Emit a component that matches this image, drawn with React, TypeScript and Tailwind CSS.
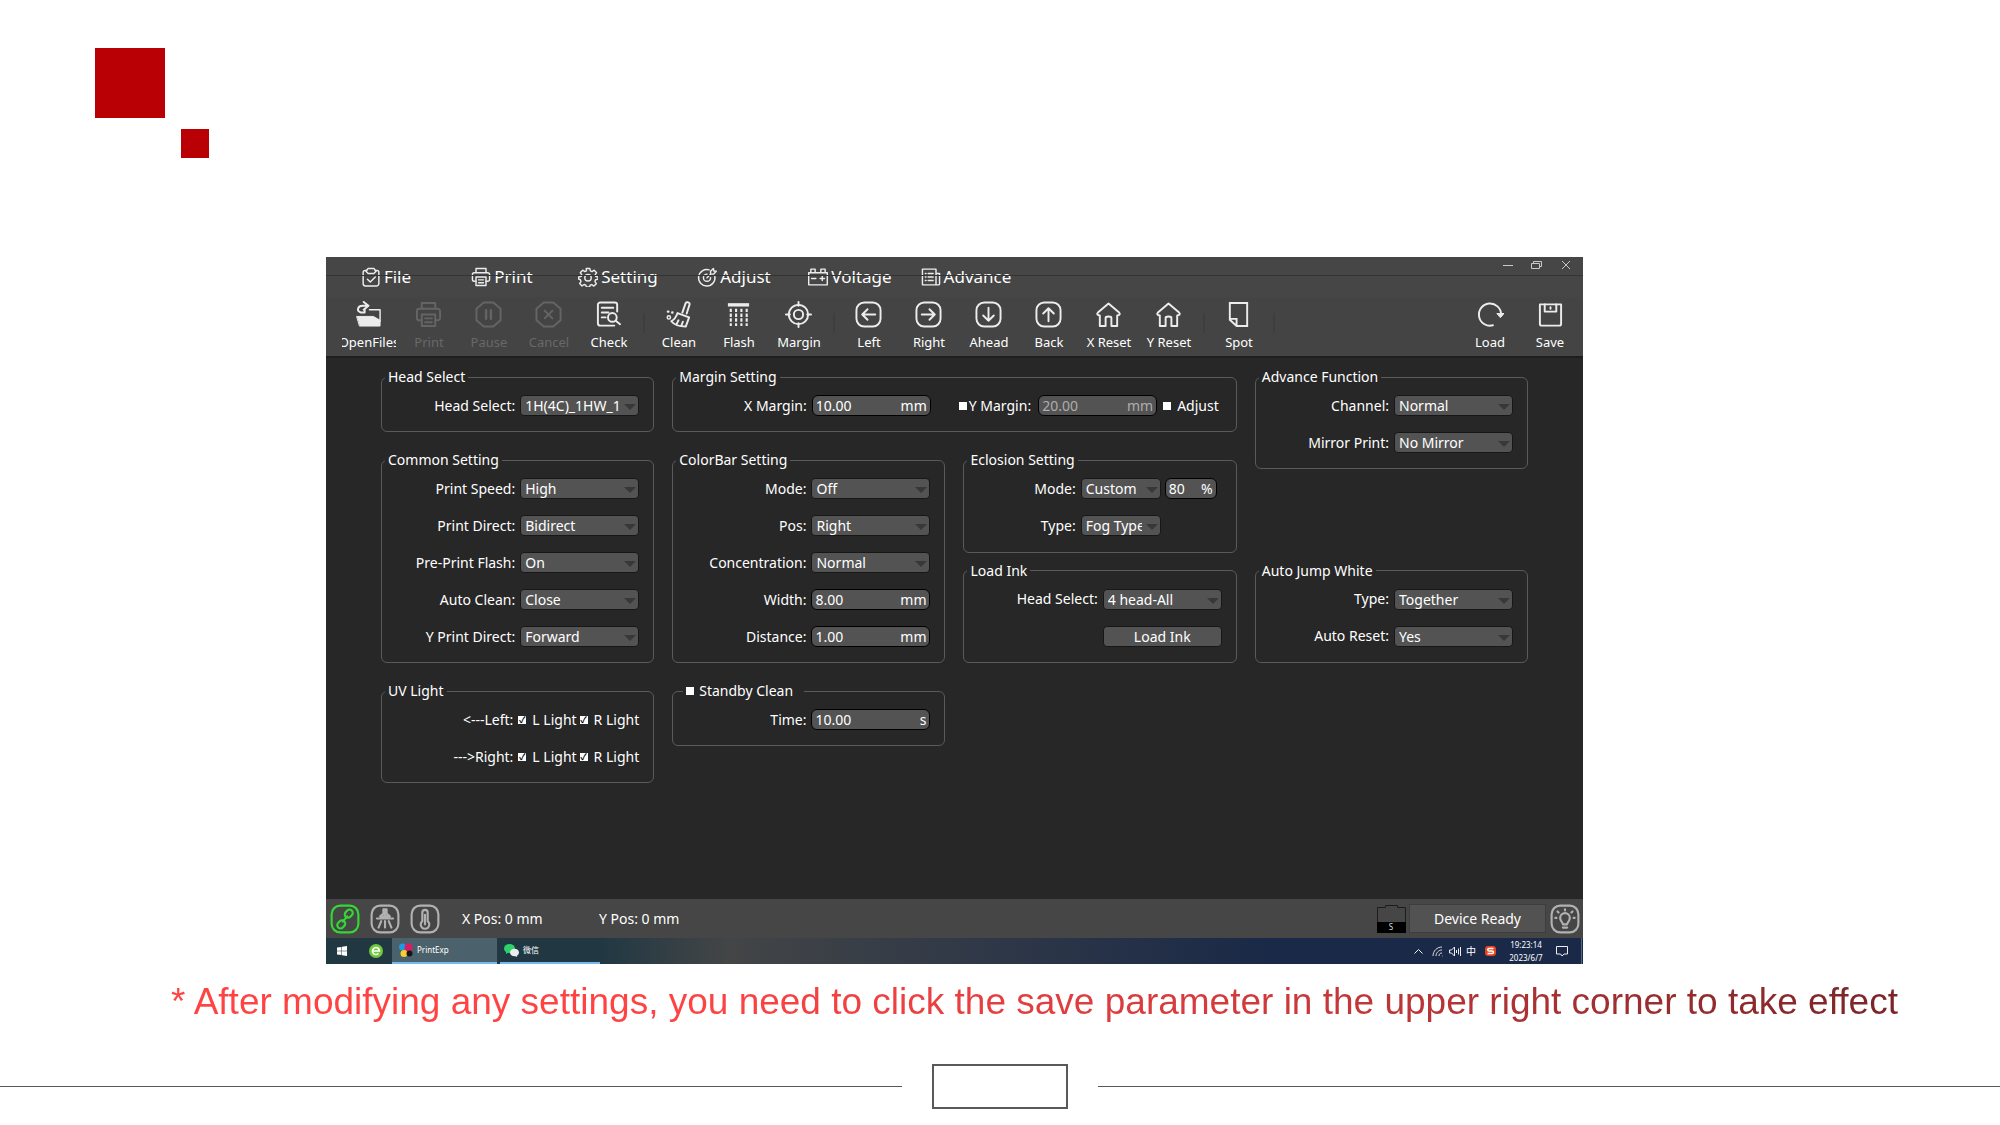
import type { ReactNode } from "react";

interface FieldProps {
  id: string
  label: string
}

interface SelectFieldProps extends FieldProps {
  value: string
  short?: boolean
}

interface UnitInputProps {
  id: string
  value: string
  unit: string
  short?: boolean
  disabled?: boolean
}

interface CheckProps {
  id: string
  checked?: boolean
}

interface GroupProps {
  title: ReactNode
  className?: string
  children: ReactNode
}

interface ToolProps {
  label: string
  disabled?: boolean
  children: ReactNode
}

/* ---------- icons ---------- */

function Icon({ size = 27, width = 2, children }: { size?: number; width?: number; children: ReactNode }) {
  return (
    <svg
      width={size}
      height={size}
      viewBox="0 0 28 28"
      fill="none"
      stroke="currentColor"
      strokeWidth={width}
      strokeLinecap="round"
      strokeLinejoin="round"
      className="shrink-0 opacity-90"
      aria-hidden="true"
    >
      {children}
    </svg>
  )
}

const fileIcon = (
  <>
    <path d="M8 5H5.500a2.500 2.500 0 0 0-2.500 2.500V23a3.500 3.500 0 0 0 3.500 3.500h15A3.500 3.500 0 0 0 25 23V7.500A2.500 2.500 0 0 0 22.500 5H20" />
    <path d="M10 2h8l3 4-3 3h-8L7 6zM9 17l4 4 7-7" />
  </>
)

const printIcon = (
  <>
    <path d="M7 8V2h14v6M7 20H4.500A2.500 2.500 0 0 1 2 17.500V10.500A2.500 2.500 0 0 1 4.500 8h19a2.500 2.500 0 0 1 2.500 2.500v7a2.500 2.500 0 0 1-2.500 2.500H21" />
    <path d="M7 14h14v12H7zM10.500 18h7M10.500 22h7" />
  </>
)

const settingIcon = (
  <>
    <path d="M11.500 2h5l.8 3.500 2.400 1 3-2 3.300 3.400-2 3.100 1 2.300 3 .7v3l-3.500.9-.9 2.300 2 3.200-3.300 3.300-3.100-2-2.200.9-.8 2.400h-4.400l-.8-2.600-2.400-.9-3 2-3.300-3.300 2-3-1-2.400L1 17v-3l3.400-.8.9-2.200-2-3.200 3.300-3.300 3.100 2 2.200-1z" />
    <circle cx="14" cy="15" r="4.500" />
  </>
)

const adjustIcon = (
  <>
    <path d="M17 4A11.500 11.500 0 1 0 25 13" />
    <path d="M14 10a5 5 0 1 0 5 5M14 15l5-5M19 10V6l4-4 .5 3.500L27 6l-4 4z" />
  </>
)

const voltageIcon = (
  <path d="M1 8h26v17H1zM4 8V3h6v5M18 8V3h6v5M5 16h6M17 16h6M20 13v6" />
)

const advanceIcon = (
  <>
    <path d="M2 3h19v22H2zM21 9h5v14.500a1.500 1.500 0 0 1-1.500 1.500H21" />
    <path d="M6 9h1M10 9h7M6 14h1M10 14h7M6 19h1M10 19h7" />
  </>
)

const openIcon = (
  <>
    <path d="M15 9h11v12" strokeWidth="1.500" />
    <path d="M2 16h17l7 4v6H5z" fill="currentColor" strokeWidth="1" />
    <path d="M6 12C1 10 3 5 8 5h4M9 1l5 4-5 4M6 12h4V9" />
  </>
)

const frame = <path d="M9 1.500h10L26.500 8v12L19 26.500H9L1.500 20V8z" strokeLinejoin="round" />
const roundFrame = <rect x="1.500" y="1.500" width="25" height="25" rx="8" />

const checkIcon = (
  <>
    <path d="M23 11V4a2.500 2.500 0 0 0-2.500-2.500h-15A2.500 2.500 0 0 0 3 4v19a2.500 2.500 0 0 0 2.500 2.500H20" />
    <path d="M7 7h12M7 12h7M7 17h4" />
    <circle cx="18" cy="17" r="4.500" />
    <path d="M21.500 20.500 26 24" />
  </>
)

const cleanIcon = (
  <>
    <path d="M18 12l3.500-10c1-1.500 4.500-.5 4 1.500L22.500 13" />
    <path d="M13 12.500 25 17l-3.500 9.500C15 26.500 9 24 6.500 21c3-1.500 5-4 6.500-8.500zM12 24l2-4M17 25.500l1.500-4" />
    <circle cx="4" cy="17" r="1.700" strokeWidth="1.500" />
    <path d="M3 11h.5M7.500 12h.2" strokeWidth="2.500" />
  </>
)

const flashIcon = (
  <>
    <path d="M3 4h22" strokeWidth="3.500" strokeLinecap="butt" />
    <path d="M6 8v18M11.500 8v18M17 8v18M22.500 8v18" strokeDasharray="3.500 1.500" strokeWidth="2.200" strokeLinecap="butt" />
  </>
)

const marginIcon = (
  <>
    <circle cx="14" cy="14" r="10" />
    <circle cx="14" cy="14" r="4.800" />
    <path d="M14 1v4M14 23v4M1 14h4M23 14h4" />
  </>
)

const homeIcon = (
  <path d="M14 2.500 3 12c-1.500 1.500-.5 3 2 3v11h6v-8.500c0-2 6-2 6 0V26h6V15c2.500 0 3.500-1.500 2-3z" />
)

const spotIcon = <path d="M5 2h18v24H12l-7-6.500zM5 18.500h7V26" strokeLinejoin="miter" />

const loadIcon = (
  <>
    <path d="M16.500 25.200A11.500 11.500 0 1 1 25 14" />
    <path d="M21 13h7l-3.500 4z" fill="currentColor" strokeWidth="1" />
  </>
)

const saveIcon = (
  <>
    <path d="M3 3.500h22v20a2 2 0 0 1-2 2H5a2 2 0 0 1-2-2z" />
    <path d="M8 3.500V11h12V3.500M14 6.500V8" />
  </>
)

const linkIcon = (
  <>
    <rect x="13.500" y="6" width="8" height="6" rx="3" transform="rotate(-45 17.500 9)" />
    <rect x="6.500" y="16" width="8" height="6" rx="3" transform="rotate(-45 10.500 19)" />
    <path d="M12 16.500 16 11.500" />
  </>
)

const nozzleIcon = (
  <path d="M14 5v5M12.500 5h3v4l3 2.500h-9l3-2.500zM6.500 13.500h15M10.500 16 8 22M14 16v6M17.500 16l2.500 6" />
)

const thermoIcon = (
  <>
    <path d="M11.500 16V8a2.500 2.500 0 0 1 5 0v8a4 4 0 1 1-5 0z" />
    <path d="M14 10v9" strokeWidth="2" />
  </>
)

const bulbIcon = (
  <>
    <path d="M12 19c0-2-2.500-3-2.500-6a4.500 4.500 0 0 1 9 0c0 3-2.500 4-2.500 6zM12 22h4" />
    <path d="M14 5v1M20 8l1-1M8 8 7 7M5 13h1M22 13h1" />
  </>
)

/* ---------- form parts ---------- */

function Select({ id, value, short }: { id: string; value: string; short?: boolean }) {
  return (
    <span className={`relative shrink-0 ${short ? "w-20" : "w-[119px]"}`}>
      <select
        id={id}
        defaultValue={value}
        className="block h-[21px] w-full appearance-none overflow-hidden text-clip rounded border border-[#171717] bg-[#535353] pl-1 pr-[18px] text-sm leading-[19px] text-white"
      >
        <option>{value}</option>
      </select>
      <svg width="12" height="6" viewBox="0 0 12 6" className="pointer-events-none absolute right-[3px] top-[9px]" aria-hidden="true">
        <path d="M0 0h12L6 6z" fill="#383838" />
      </svg>
    </span>
  )
}

function UnitInput({ id, value, unit, short, disabled }: UnitInputProps) {
  return (
    <span
      className={`flex h-[21px] shrink-0 items-center rounded-md border border-black bg-[#535353] px-[3px] ${short ? "w-[52px]" : "w-[119px]"} ${disabled ? "text-[#adadad]" : "text-white"}`}
    >
      <input id={id} defaultValue={value} disabled={disabled} className="h-[19px] w-0 flex-1 bg-transparent text-sm leading-[19px]" />
      <span>{unit}</span>
    </span>
  )
}

function Check({ id, checked }: CheckProps) {
  return (
    <input
      id={id}
      type="checkbox"
      defaultChecked={checked}
      className="grid size-2 shrink-0 appearance-none place-items-center bg-white checked:before:text-[9px] checked:before:font-bold checked:before:leading-2 checked:before:text-black checked:before:content-['✓']"
    />
  )
}

function SelectField({ id, label, value, short }: SelectFieldProps) {
  return (
    <div className="flex h-[21px] items-center justify-end gap-[5px]">
      <label htmlFor={id}>{label}</label>
      <Select id={id} value={value} short={short} />
    </div>
  )
}

function InputField({ id, label, value, unit }: FieldProps & { value: string; unit: string }) {
  return (
    <div className="flex h-[21px] items-center justify-end gap-[5px]">
      <label htmlFor={id}>{label}</label>
      <UnitInput id={id} value={value} unit={unit} />
    </div>
  )
}

function Group({ title, className = "", children }: GroupProps) {
  return (
    <fieldset className={`min-w-0 rounded-md border border-[#5a5a5a] pb-[15px] pr-[14px] ${className}`}>
      <legend className="ml-[3px] px-[3px] leading-5">{title}</legend>
      <div className="flex flex-col gap-4 pt-2">{children}</div>
    </fieldset>
  )
}

function UvRow({ id, label }: FieldProps) {
  return (
    <div className="flex h-[21px] items-center justify-end">
      <span className="mr-[5px]">{label}</span>
      <Check id={`${id}-l`} checked />
      <label htmlFor={`${id}-l`} className="ml-1.5 mr-[3px]">L Light</label>
      <Check id={`${id}-r`} checked />
      <label htmlFor={`${id}-r`} className="ml-1.5">R Light</label>
    </div>
  )
}

/* ---------- bars ---------- */

function MenuItem({ label, children }: ToolProps) {
  return (
    <button className="flex w-[116px] items-center justify-center gap-[3px] text-[17px] leading-6">
      <Icon size={20} width={2}>{children}</Icon>
      {label}
    </button>
  )
}

function Tool({ label, disabled, children }: ToolProps) {
  return (
    <button disabled={disabled} className="flex w-[60px] flex-col items-center gap-[5px] disabled:text-[#686868]">
      <Icon>{children}</Icon>
      <span className="flex w-[54px] justify-center overflow-hidden whitespace-nowrap text-[13px] leading-[18px]">{label}</span>
    </button>
  )
}

function Separator() {
  return <span className="mx-1 mt-3 h-5 w-0.5 bg-[#3e3e3e]" />
}

function StatusIcon({ label, className = "", children }: { label: string; className?: string; children: ReactNode }) {
  return (
    <button aria-label={label} className={className}>
      <Icon size={30} width={2}>
        {roundFrame}
        {children}
      </Icon>
    </button>
  )
}

function TitleBar() {
  return (
    <header className="bg-[#444]">
      <div className="relative flex h-10 justify-between bg-[#464646] pl-[2px]">
        <nav className="flex items-center">
          <MenuItem label="File">{fileIcon}</MenuItem>
          <MenuItem label="Print">{printIcon}</MenuItem>
          <MenuItem label="Setting">{settingIcon}</MenuItem>
          <MenuItem label="Adjust">{adjustIcon}</MenuItem>
          <MenuItem label="Voltage">{voltageIcon}</MenuItem>
          <MenuItem label="Advance">{advanceIcon}</MenuItem>
        </nav>
        <div className="flex h-4 items-center gap-[18px] pr-3 text-[#c8c8c8]">
          <button aria-label="Minimize">
            <svg width="10" height="10" viewBox="0 0 10 10" stroke="currentColor"><path d="M0 5.500h10" /></svg>
          </button>
          <button aria-label="Restore">
            <svg width="12" height="10" viewBox="0 0 12 10" fill="none" stroke="currentColor"><path d="M.5 3.500h8v5h-8zM2.500 3.500v-2h8v5h-2" /></svg>
          </button>
          <button aria-label="Close">
            <svg width="10" height="10" viewBox="0 0 10 10" stroke="currentColor"><path d="M1 1l8 8M9 1 1 9" /></svg>
          </button>
        </div>
        <span className="pointer-events-none absolute inset-x-0 top-[18px] h-px bg-[#343434]" />
      </div>
      <div className="flex h-[59px] items-start pl-[13px] pr-[3px] pt-1">
        <Tool label="OpenFiles">{openIcon}</Tool>
        <Tool label="Print" disabled>{printIcon}</Tool>
        <Tool label="Pause" disabled>
          {frame}
          <path d="M11.500 9.500v9M16.500 9.500v9" strokeWidth="2.500" />
        </Tool>
        <Tool label="Cancel" disabled>
          {frame}
          <path d="m10 10 8 8M18 10l-8 8" />
        </Tool>
        <Tool label="Check">{checkIcon}</Tool>
        <Separator />
        <Tool label="Clean">{cleanIcon}</Tool>
        <Tool label="Flash">{flashIcon}</Tool>
        <Tool label="Margin">{marginIcon}</Tool>
        <Separator />
        <Tool label="Left">
          {roundFrame}
          <path d="M21 14H7.500M13 8.500 7.500 14l5.500 5.500" />
        </Tool>
        <Tool label="Right">
          {roundFrame}
          <path d="M7 14h13.500M15 8.500l5.500 5.500-5.500 5.500" />
        </Tool>
        <Tool label="Ahead">
          {roundFrame}
          <path d="M14 7v13.500M8.500 15l5.500 5.500 5.500-5.500" />
        </Tool>
        <Tool label="Back">
          {roundFrame}
          <path d="M14 21V7.500M8.500 13 14 7.500l5.500 5.500" />
        </Tool>
        <Tool label="X Reset">{homeIcon}</Tool>
        <Tool label="Y Reset">{homeIcon}</Tool>
        <Separator />
        <Tool label="Spot">{spotIcon}</Tool>
        <Separator />
        <span className="flex-1" />
        <Tool label="Load">{loadIcon}</Tool>
        <Tool label="Save">{saveIcon}</Tool>
      </div>
    </header>
  )
}

function Settings() {
  return (
    <main className="grid min-h-[543px] grid-cols-4 content-start gap-x-[18px] border-t-2 border-[#1f1f1f] bg-[#272727] px-[55px] pt-[9px] text-sm">
      <Group title="Head Select">
        <SelectField id="head" label="Head Select:" value="1H(4C)_1HW_1" />
      </Group>

      <Group title="Margin Setting" className="col-span-2">
        <div className="flex h-[21px] items-center justify-end">
          <label htmlFor="x-margin" className="mr-[5px]">X Margin:</label>
          <UnitInput id="x-margin" value="10.00" unit="mm" />
          <span className="ml-7 mr-0.5 flex items-center">
            <Check id="y-margin-on" />
          </span>
          <label htmlFor="y-margin-on" className="mr-[7px]">Y Margin:</label>
          <UnitInput id="y-margin" value="20.00" unit="mm" disabled />
          <span className="ml-1.5 mr-[3px] flex items-center gap-1.5">
            <Check id="adjust" />
            <label htmlFor="adjust">Adjust</label>
          </span>
        </div>
      </Group>

      <Group title="Advance Function" className="row-span-2 self-start">
        <SelectField id="channel" label="Channel:" value="Normal" />
        <SelectField id="mirror" label="Mirror Print:" value="No Mirror" />
      </Group>

      <Group title="Common Setting" className="row-span-2 mt-[18px]">
        <SelectField id="speed" label="Print Speed:" value="High" />
        <SelectField id="direct" label="Print Direct:" value="Bidirect" />
        <SelectField id="pre-flash" label="Pre-Print Flash:" value="On" />
        <SelectField id="auto-clean" label="Auto Clean:" value="Close" />
        <SelectField id="y-direct" label="Y Print Direct:" value="Forward" />
      </Group>

      <Group title="ColorBar Setting" className="row-span-2 mt-[18px]">
        <SelectField id="bar-mode" label="Mode:" value="Off" />
        <SelectField id="bar-pos" label="Pos:" value="Right" />
        <SelectField id="bar-conc" label="Concentration:" value="Normal" />
        <InputField id="bar-width" label="Width:" value="8.00" unit="mm" />
        <InputField id="bar-distance" label="Distance:" value="1.00" unit="mm" />
      </Group>

      <Group title="Eclosion Setting" className="mt-[18px]">
        <div className="flex items-center justify-end gap-1 pr-[5px]">
          <SelectField id="ecl-mode" label="Mode:" value="Custom" short />
          <UnitInput id="ecl-percent" value="80" unit="%" short />
        </div>
        <div className="pr-[61px]">
          <SelectField id="ecl-type" label="Type:" value="Fog Type" short />
        </div>
      </Group>

      <Group title="Load Ink" className="col-start-3 mt-2">
        <SelectField id="ink-head" label="Head Select:" value="4 head-All" />
        <button className="h-[21px] w-[119px] self-end rounded border border-[#171717] bg-[#535353] leading-[19px]">Load Ink</button>
      </Group>

      <Group title="Auto Jump White" className="mt-2">
        <SelectField id="jump-type" label="Type:" value="Together" />
        <SelectField id="jump-reset" label="Auto Reset:" value="Yes" />
      </Group>

      <Group title="UV Light" className="mt-[18px]">
        <UvRow id="uv-left" label="<---Left:" />
        <UvRow id="uv-right" label="--->Right:" />
      </Group>

      <Group
        title={
          <span className="flex items-center gap-[5px] pr-2">
            <Check id="standby" />
            <label htmlFor="standby">Standby Clean</label>
          </span>
        }
        className="mt-[18px] self-start [&>legend]:ml-[10px]"
      >
        <InputField id="standby-time" label="Time:" value="10.00" unit="s" />
      </Group>
    </main>
  )
}

function StatusBar() {
  return (
    <footer className="flex h-[39px] items-center bg-[#464646] pl-1 pr-[3px] text-sm">
      <div className="flex gap-[10px]">
        <StatusIcon label="Connection" className="text-[#33e833]">{linkIcon}</StatusIcon>
        <StatusIcon label="Nozzle" className="text-[#bdbdbd]">{nozzleIcon}</StatusIcon>
        <StatusIcon label="Temperature" className="text-[#bdbdbd]">{thermoIcon}</StatusIcon>
      </div>
      <span className="ml-[22px] w-[137px]">X Pos: 0 mm</span>
      <span className="flex-1">Y Pos: 0 mm</span>
      <svg width="29" height="29" viewBox="0 0 29 29" fill="none" stroke="#1c1c1c" aria-hidden="true">
        <path d="M.5 28V3.500h8v-2h12v2h8V28z" />
        <path d="M0 18h29v11H0z" fill="#000" stroke="none" />
        <text x="14" y="26" textAnchor="middle" fontSize="8" fill="#ddd" stroke="none">S</text>
      </svg>
      <span className="ml-[3px] mr-1 w-[137px] border border-[#3d3d3d] bg-[#525252] text-center leading-[27px]">Device Ready</span>
      <StatusIcon label="Lamp" className="text-[#bdbdbd]">{bulbIcon}</StatusIcon>
    </footer>
  )
}

function Taskbar() {
  return (
    <div className="flex h-[26px] items-center bg-linear-to-r from-[#213843] from-22% via-[#434546] via-32% to-[#1a2947] to-75% text-[10px]">
      <button aria-label="Start" className="ml-[11px] mr-[22px]">
        <svg width="10" height="10" viewBox="0 0 10 10" fill="#fff"><path d="M0 1.500 4.500 1v3.700H0zM5 .8 10 0v4.700H5zM0 5.300h4.500V9L0 8.500zM5 5.300h5V10l-5-.8z" /></svg>
      </button>
      <button aria-label="Browser">
        <svg width="14" height="14" viewBox="0 0 14 14">
          <circle cx="7" cy="7" r="7" fill="#6fc93a" />
          <path d="M3.500 7h7a3.500 3.500 0 1 0-1 2.500" fill="none" stroke="#fff" strokeWidth="1.600" />
        </svg>
      </button>
      <button className="ml-[9px] flex h-full w-[105px] items-center gap-1 border-b-2 border-[#76b9ed] bg-[#4b616b] pl-[7px]">
        <svg width="14" height="14" viewBox="0 0 14 14" aria-hidden="true">
          <circle cx="3.500" cy="4" r="3.500" fill="#1d9be0" />
          <circle cx="9.500" cy="4.500" r="4" fill="#d81e63" />
          <circle cx="5" cy="10.500" r="3.500" fill="#f8cf2c" />
          <circle cx="10.500" cy="10.500" r="3" fill="#15151c" />
        </svg>
        <span className="text-[8px]">PrintExp</span>
      </button>
      <button className="ml-[3px] flex h-full w-[100px] items-center gap-1 border-b-2 border-[#76b9ed] pl-1">
        <svg width="15" height="13" viewBox="0 0 15 13" aria-hidden="true">
          <ellipse cx="5.500" cy="4.500" rx="5.500" ry="4.500" fill="#2ed16c" />
          <path d="M2 7v3l3-2z" fill="#2ed16c" />
          <ellipse cx="10.500" cy="8.500" rx="4.500" ry="3.800" fill="#e9eef0" />
          <path d="M13 10.500V13l-3-1.500z" fill="#e9eef0" />
        </svg>
        <span className="text-[8px]">微信</span>
      </button>
      <span className="flex-1" />
      <div className="flex items-center gap-[5px]">
        <svg width="9" height="6" viewBox="0 0 9 6" fill="none" stroke="#eee"><path d="M.5 5.500l4-4 4 4" /></svg>
        <svg width="12" height="11" viewBox="0 0 12 11" fill="none" stroke="#ddd" className="ml-1">
          <path d="M1 10C1 5 5 1 10 1M4 10c0-3 2.500-6 6-6M7 10c0-2 1-3 3-3M10 10h.5" />
        </svg>
        <svg width="12" height="11" viewBox="0 0 12 11" fill="none" stroke="#eee"><path d="M.5 4h2l3-3v9l-3-3h-2zM7.500 4v3M9.500 2.500v6M11.500 1v9" /></svg>
        <span>中</span>
        <svg width="11" height="10" viewBox="0 0 11 10" className="ml-1" aria-hidden="true">
          <rect width="11" height="10" rx="3" fill="#e8431e" />
          <path d="M8.500 2.500H4C2 2.500 2.500 5 4 5h3c2 0 2 2.500 0 2.500H2.500" fill="none" stroke="#fff" strokeWidth="1.500" />
        </svg>
      </div>
      <div className="ml-3 w-9 text-center text-[8px] leading-[13px]">
        <div>19:23:14</div>
        <div>2023/6/7</div>
      </div>
      <svg width="12" height="12" viewBox="0 0 12 12" fill="none" stroke="#eee" className="ml-3 mr-[13px]"><path d="M.5 1.500h11v7.500H8L6 11 4.500 9h-4z" /></svg>
      <span className="mr-px h-full w-px bg-[#5a6680]" />
    </div>
  )
}

export default function App() {
  return (
    <div className="min-h-screen bg-white">
      <div className="flex pl-[95px] pt-12">
        <span className="size-[70px] bg-[#b80005]" />
        <span className="ml-4 mt-[81px] h-[29px] w-7 bg-[#b80005]" />
      </div>

      <section className="ml-[16.3%] mr-[20.85%] mt-[99px] font-['Noto_Sans','Noto_Sans_CJK_SC',sans-serif] text-white">
        <TitleBar />
        <Settings />
        <StatusBar />
        <Taskbar />
      </section>

      <p className="mt-[17px] whitespace-nowrap pl-[171px] font-['Liberation_Sans',Arial,sans-serif] text-[37px] leading-[42px]">
        <span className="bg-linear-to-r from-[#ff4343] from-30% via-[#d23a3c] via-62% to-[#7a2528] bg-clip-text text-transparent">
          * After modifying any settings, you need to click the save parameter in the upper right corner to take effect
        </span>
      </p>

      <div className="mt-[41px] flex items-center justify-between gap-[30px]">
        <span className="h-px flex-1 bg-[#595959]" />
        <span className="h-[45px] w-[136px] border-2 border-[#595959]" />
        <span className="h-px flex-1 bg-[#595959]" />
      </div>
    </div>
  )
}
